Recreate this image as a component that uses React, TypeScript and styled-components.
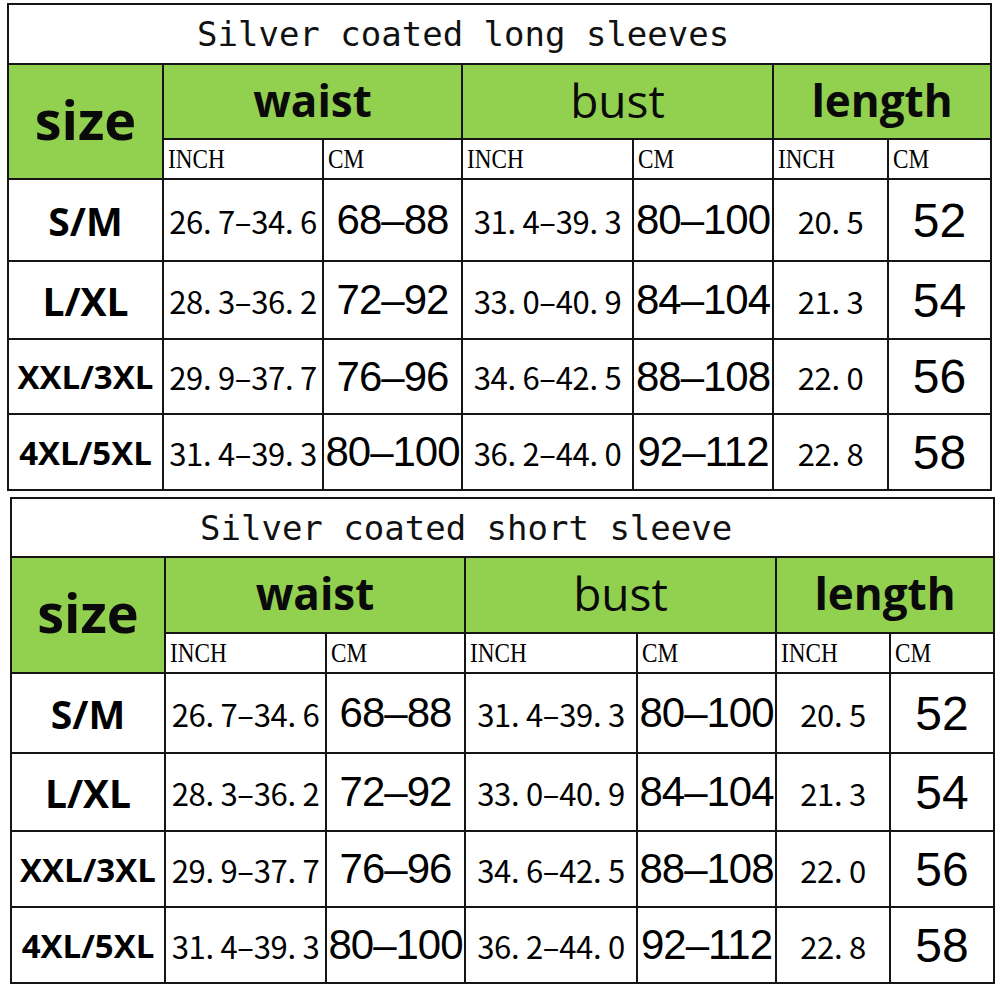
import * as React from "react";
import styled, { createGlobalStyle } from "styled-components";

const GlobalStyle = createGlobalStyle`
  body {
    margin: 0;
    background: #ffffff;
  }
`;

const Page = styled.div`
  width: 1000px;
  height: 1000px;
  overflow: hidden;
  background: #ffffff;
`;

const Sheet = styled.div<{ $cols: string; $rows: string; $left: number; $top: number }>`
  display: grid;
  grid-template-columns: ${(p) => p.$cols};
  grid-template-rows: ${(p) => p.$rows};
  gap: 2px;
  padding: 2px;
  width: max-content;
  margin: ${(p) => p.$top}px 0 0 ${(p) => p.$left}px;
  background: #151515;
`;

const Cell = styled.div`
  background: #ffffff;
  display: flex;
  align-items: center;
  justify-content: center;
  overflow: hidden;
  white-space: nowrap;
  color: #000;
`;

const Title = styled(Cell)`
  grid-column: 1 / -1;
  justify-content: flex-start;
  padding-left: 188px;
  font-family: "DejaVu Sans Mono", "Liberation Mono", monospace;
  font-size: 34px;
  color: #111;
`;

const GreenCell = styled(Cell)<{ $bold?: boolean; $span?: number }>`
  grid-column: span ${(p) => p.$span ?? 1};
  background: #92d050;
  font-family: "Open Sans", "Noto Sans", sans-serif;
  font-weight: ${(p) => (p.$bold ? 700 : 400)};
  font-size: ${(p) => (p.$bold ? 44 : 46)}px;
  padding-bottom: 4px;
  color: #0a0a0a;
`;

const SizeHead = styled(GreenCell)`
  grid-row: span 2;
  font-size: 54px;
  padding-bottom: 6px;
`;

const Unit = styled(Cell)`
  justify-content: flex-start;
  padding-left: 4px;
  font-family: "Liberation Serif", "Times New Roman", serif;
  font-size: 27px;

  span {
    display: inline-block;
    transform: scaleX(0.86);
    transform-origin: left center;
  }
`;

const SizeLabel = styled(Cell)<{ $small?: boolean }>`
  font-family: "Open Sans", "Noto Sans", sans-serif;
  font-weight: 700;
  font-size: ${(p) => (p.$small ? 33 : 39)}px;
`;

const InchValue = styled(Cell)`
  font-family: "Noto Sans CJK SC", "Noto Sans", sans-serif;
  font-size: 31px;
  letter-spacing: -0.3px;
`;

const CmValue = styled(Cell)<{ $large?: boolean }>`
  font-family: "Liberation Sans", Arial, sans-serif;
  font-size: ${(p) => (p.$large ? 48 : 42)}px;
  letter-spacing: ${(p) => (p.$large ? 0 : -1)}px;
`;

type Row = {
  size: string;
  wIn: string;
  wCm: string;
  bIn: string;
  bCm: string;
  lIn: string;
  lCm: string;
};

const rows: Row[] = [
  { size: "S/M", wIn: "26. 7–34. 6", wCm: "68–88", bIn: "31. 4–39. 3", bCm: "80–100", lIn: "20. 5", lCm: "52" },
  { size: "L/XL", wIn: "28. 3–36. 2", wCm: "72–92", bIn: "33. 0–40. 9", bCm: "84–104", lIn: "21. 3", lCm: "54" },
  { size: "XXL/3XL", wIn: "29. 9–37. 7", wCm: "76–96", bIn: "34. 6–42. 5", bCm: "88–108", lIn: "22. 0", lCm: "56" },
  { size: "4XL/5XL", wIn: "31. 4–39. 3", wCm: "80–100", bIn: "36. 2–44. 0", bCm: "92–112", lIn: "22. 8", lCm: "58" },
];

type ChartProps = {
  title: string;
  cols: string;
  rowHeights: string;
  left: number;
  top: number;
};

const SizeChart = ({ title, cols, rowHeights, left, top }: ChartProps) => (
  <Sheet $cols={cols} $rows={rowHeights} $left={left} $top={top}>
    <Title>{title}</Title>
    <SizeHead $bold>size</SizeHead>
    <GreenCell $bold $span={2}>waist</GreenCell>
    <GreenCell $span={2}>bust</GreenCell>
    <GreenCell $bold $span={2}>length</GreenCell>
    {["INCH", "CM", "INCH", "CM", "INCH", "CM"].map((u, i) => (
      <Unit key={i}>
        <span>{u}</span>
      </Unit>
    ))}
    {rows.map((r) => (
      <React.Fragment key={r.size}>
        <SizeLabel $small={r.size.length > 4}>{r.size}</SizeLabel>
        <InchValue>{r.wIn}</InchValue>
        <CmValue>{r.wCm}</CmValue>
        <InchValue>{r.bIn}</InchValue>
        <CmValue>{r.bCm}</CmValue>
        <InchValue>{r.lIn}</InchValue>
        <CmValue $large>{r.lCm}</CmValue>
      </React.Fragment>
    ))}
  </Sheet>
);

export default function App() {
  return (
    <Page>
      <GlobalStyle />
      <SizeChart
        title="Silver coated long sleeves"
        cols="153px 158px 137px 169px 138px 113px 101px"
        rowHeights="58px 73px 38px 80px 76px 73px 74px"
        left={7}
        top={3}
      />
      <SizeChart
        title="Silver coated short sleeve"
        cols="152px 159px 137px 170px 137px 112px 102px"
        rowHeights="57px 74px 38px 78px 76px 74px 74px"
        left={10}
        top={6}
      />
    </Page>
  );
}
